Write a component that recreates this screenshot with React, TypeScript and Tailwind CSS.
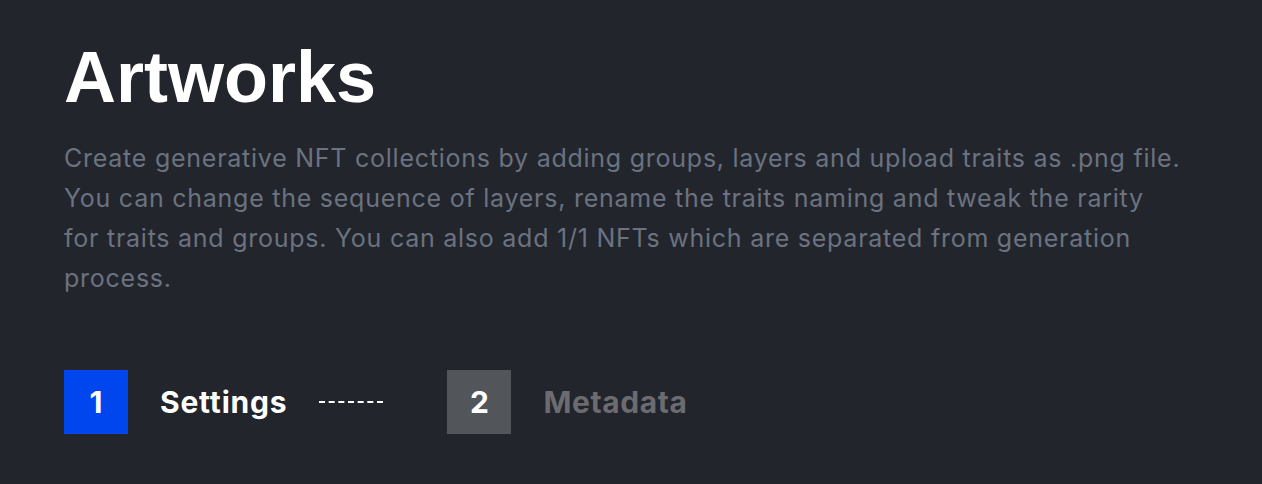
export default function App() {
  return (
    <div className="min-h-[484px] w-full bg-[#22252c] pl-16 pr-6 pt-[34px]" style={{ fontFamily: "Inter, 'Liberation Sans', sans-serif" }}>
      <h1 className="text-[72px] font-bold leading-[86px] text-white" style={{ fontFamily: "'Liberation Sans', Arial, sans-serif" }}>Artworks</h1>
      <p className="mt-[18px] max-w-[1160px] text-[25px] leading-[40px] tracking-[0.75px] text-[#6b7280]">
        Create generative NFT collections by adding groups, layers and upload traits as .png file. You can change the sequence of layers, rename the traits naming and tweak the rarity
        <br />
        for traits and groups. You can also add 1/1 NFTs which are separated from generation
        <br />
        process.
      </p>
      <div className="mt-[72px] flex items-center gap-8">
        <div className="flex h-16 w-16 items-center justify-center bg-[#0046ee] text-[30px] font-bold text-white">1</div>
        <span className="text-[30px] font-bold tracking-[0.8px] text-white">Settings</span>
        <div className="mr-8 w-16 border-t-2 border-dashed border-white" />
        <div className="flex h-16 w-16 items-center justify-center bg-[#52555a] text-[30px] font-bold text-white">2</div>
        <span className="text-[30px] font-bold tracking-[0.6px] text-[#6b6b70]">Metadata</span>
      </div>
    </div>
  );
}
